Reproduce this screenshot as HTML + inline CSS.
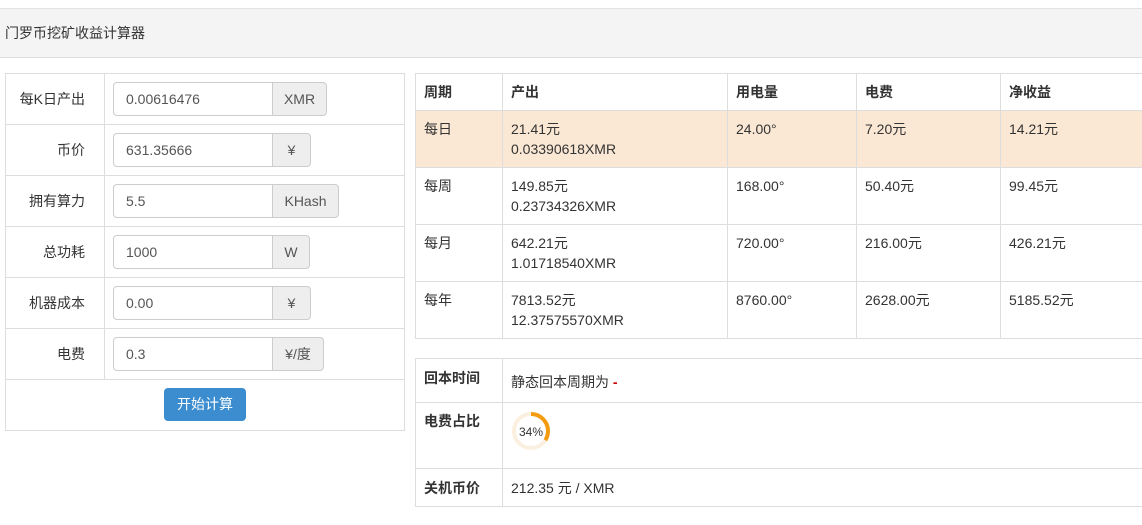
<!DOCTYPE html>
<html><head><meta charset="utf-8"><style>
*{box-sizing:border-box;margin:0;padding:0}
body{width:1142px;height:525px;overflow:hidden;background:#fff;font-family:"Liberation Sans","Noto Sans CJK SC",sans-serif;font-size:14px;line-height:16px;color:#333;position:relative}
.a{position:absolute}
.hdr{left:0;top:8px;width:1142px;height:50px;background:#f4f4f4;border-top:1px solid #e3e3e3;border-bottom:1px solid #ddd}
.hdr span{position:absolute;left:5px;top:16px;font-size:14px}
.hl{background:#ddd;height:1px}
.vl{background:#ddd;width:1px}
.lab{width:80px;text-align:right;left:5px}
.inp{left:113px;width:160px;height:34px;border:1px solid #ccc;border-radius:4px 0 0 4px;padding:8px 12px;color:#555;background:#fff}
.add{left:272px;height:34px;border:1px solid #ccc;border-radius:0 4px 4px 0;background:#eee;color:#555;text-align:center;padding-top:8px}
.btn{left:164px;top:388px;width:82px;height:33px;background:#3c8dcf;border-radius:4px;color:#fff;text-align:center;padding-top:8px}
b{font-weight:bold}
</style></head><body>
<div class="a hdr"><span>门罗币挖矿收益计算器</span></div>

<div class="a" style="left:5px;top:73px;width:400px;height:358px;border:1px solid #ddd"></div>
<div class="a vl" style="left:104px;top:73px;height:306px"></div>
<div class="a hl" style="left:5px;top:124px;width:400px"></div>
<div class="a hl" style="left:5px;top:175px;width:400px"></div>
<div class="a hl" style="left:5px;top:226px;width:400px"></div>
<div class="a hl" style="left:5px;top:277px;width:400px"></div>
<div class="a hl" style="left:5px;top:328px;width:400px"></div>
<div class="a hl" style="left:5px;top:379px;width:400px"></div>

<div class="a lab" style="top:91px">每K日产出</div>
<div class="a lab" style="top:142px">币价</div>
<div class="a lab" style="top:193px">拥有算力</div>
<div class="a lab" style="top:244px">总功耗</div>
<div class="a lab" style="top:295px">机器成本</div>
<div class="a lab" style="top:346px">电费</div>

<div class="a inp" style="top:82px">0.00616476</div><div class="a add" style="top:82px;width:55px">XMR</div>
<div class="a inp" style="top:133px">631.35666</div><div class="a add" style="top:133px;width:39px">¥</div>
<div class="a inp" style="top:184px">5.5</div><div class="a add" style="top:184px;width:67px">KHash</div>
<div class="a inp" style="top:235px">1000</div><div class="a add" style="top:235px;width:38px">W</div>
<div class="a inp" style="top:286px">0.00</div><div class="a add" style="top:286px;width:39px">¥</div>
<div class="a inp" style="top:337px">0.3</div><div class="a add" style="top:337px;width:52px">¥/度</div>
<div class="a btn">开始计算</div>

<div class="a" style="left:415px;top:110px;width:727px;height:57px;background:#fae8d4"></div>
<div class="a hl" style="left:415px;top:73px;width:727px"></div>
<div class="a hl" style="left:415px;top:110px;width:727px"></div>
<div class="a hl" style="left:415px;top:167px;width:727px"></div>
<div class="a hl" style="left:415px;top:224px;width:727px"></div>
<div class="a hl" style="left:415px;top:281px;width:727px"></div>
<div class="a hl" style="left:415px;top:338px;width:727px"></div>
<div class="a vl" style="left:415px;top:73px;height:266px"></div>
<div class="a vl" style="left:502px;top:73px;height:266px"></div>
<div class="a vl" style="left:727px;top:73px;height:266px"></div>
<div class="a vl" style="left:856px;top:73px;height:266px"></div>
<div class="a vl" style="left:1000px;top:73px;height:266px"></div>

<div class="a" style="left:424px;top:84px"><b>周期</b></div>
<div class="a" style="left:511px;top:84px"><b>产出</b></div>
<div class="a" style="left:736px;top:84px"><b>用电量</b></div>
<div class="a" style="left:865px;top:84px"><b>电费</b></div>
<div class="a" style="left:1009px;top:84px"><b>净收益</b></div>

<div class="a" style="left:424px;top:121px">每日</div>
<div class="a" style="left:511px;top:119px;line-height:20px">21.41元<br>0.03390618XMR</div>
<div class="a" style="left:736px;top:121px">24.00°</div>
<div class="a" style="left:865px;top:121px">7.20元</div>
<div class="a" style="left:1009px;top:121px">14.21元</div>

<div class="a" style="left:424px;top:178px">每周</div>
<div class="a" style="left:511px;top:176px;line-height:20px">149.85元<br>0.23734326XMR</div>
<div class="a" style="left:736px;top:178px">168.00°</div>
<div class="a" style="left:865px;top:178px">50.40元</div>
<div class="a" style="left:1009px;top:178px">99.45元</div>

<div class="a" style="left:424px;top:235px">每月</div>
<div class="a" style="left:511px;top:233px;line-height:20px">642.21元<br>1.01718540XMR</div>
<div class="a" style="left:736px;top:235px">720.00°</div>
<div class="a" style="left:865px;top:235px">216.00元</div>
<div class="a" style="left:1009px;top:235px">426.21元</div>

<div class="a" style="left:424px;top:292px">每年</div>
<div class="a" style="left:511px;top:290px;line-height:20px">7813.52元<br>12.37575570XMR</div>
<div class="a" style="left:736px;top:292px">8760.00°</div>
<div class="a" style="left:865px;top:292px">2628.00元</div>
<div class="a" style="left:1009px;top:292px">5185.52元</div>

<div class="a hl" style="left:415px;top:358px;width:727px"></div>
<div class="a hl" style="left:415px;top:402px;width:727px"></div>
<div class="a hl" style="left:415px;top:468px;width:727px"></div>
<div class="a hl" style="left:415px;top:506px;width:727px"></div>
<div class="a vl" style="left:415px;top:358px;height:149px"></div>
<div class="a vl" style="left:502px;top:358px;height:149px"></div>

<div class="a" style="left:424px;top:370px"><b>回本时间</b></div>
<div class="a" style="left:511px;top:374px">静态回本周期为 <b style="color:#c00">-</b></div>
<div class="a" style="left:424px;top:413px"><b>电费占比</b></div>
<svg class="a" style="left:509px;top:409px" width="44" height="44" viewBox="0 0 44 44">
<circle cx="22" cy="22" r="17" fill="none" stroke="#fbf0e0" stroke-width="4"/>
<circle cx="22" cy="22" r="17" fill="none" stroke="#f39c12" stroke-width="4" stroke-dasharray="36.3 200" transform="rotate(-90 22 22)"/>
<text x="22" y="27" text-anchor="middle" font-size="12" fill="#333" font-family="Liberation Sans">34%</text>
</svg>
<div class="a" style="left:424px;top:480px"><b>关机币价</b></div>
<div class="a" style="left:511px;top:480px">212.35 元 / XMR</div>
</body></html>
